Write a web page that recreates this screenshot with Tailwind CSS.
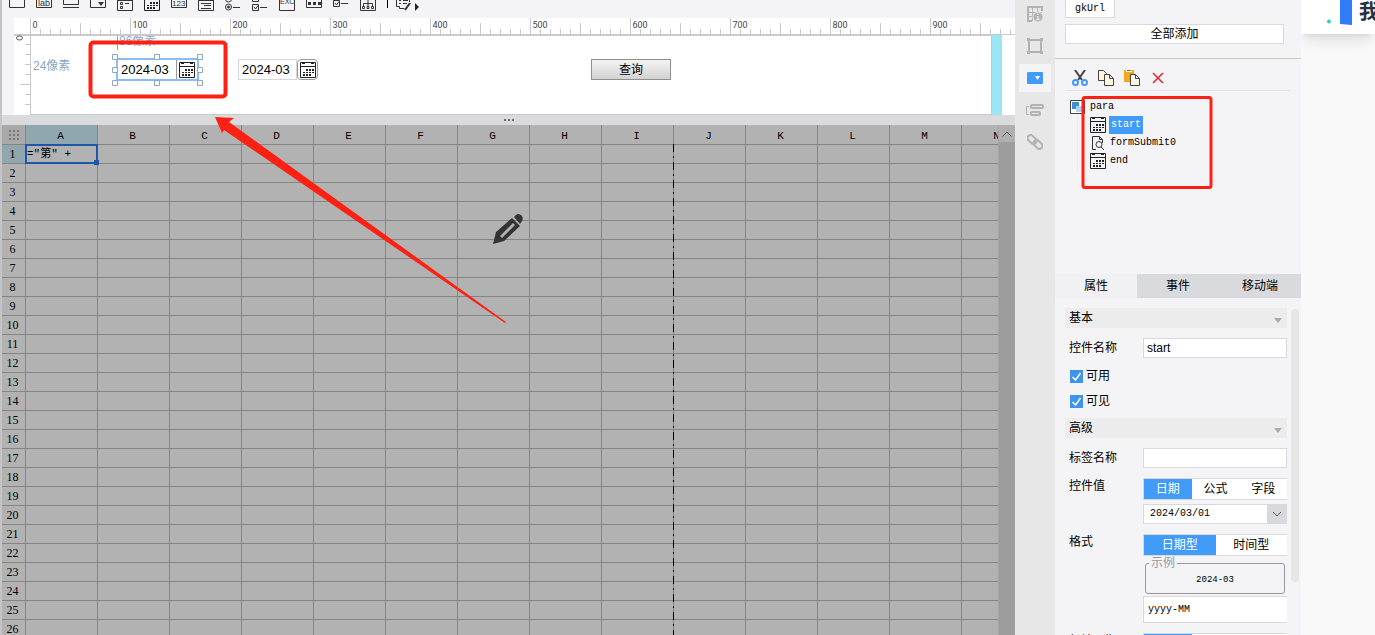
<!DOCTYPE html>
<html lang="zh-CN">
<head>
  <meta charset="UTF-8" />
  <meta name="viewport" content="width=device-width, initial-scale=1.0"/>
  <title>Report Designer</title>
  <script src="https://cdn.jsdelivr.net/npm/@tailwindcss/browser@4"></script>
</head>
<body class="relative flex h-screen overflow-hidden bg-[#f9f9f9] text-xs text-black font-['Liberation_Sans','Noto_Sans_CJK_SC',sans-serif]">
  <!-- Shared icons -->
  <svg class="hidden">
    <symbol id="calendar" viewBox="0 0 16 16">
      <path d="M.5.5h15v15H.5zM1 4.500h14M2 1.500h3M11 1.500h3" fill="none" stroke="#222"/>
      <path d="M6 7h2v2H6zM9 7h2v2H9zM12 7h2v2h-2zM3 10h2v1H3zM6 10h2v1H6zM9 10h2v1H9zM12 10h2v1h-2zM3 12h2v2H3zM6 12h2v2H6zM9 12h2v2H9z" fill="#222"/>
    </symbol>
  </svg>

  <!-- Designer -->
  <main class="flex min-w-0 flex-1 flex-col border-l-2 border-[#c4c4c6] bg-[#f4f4f7]">
    <!-- Widget toolbar -->
    <div class="flex h-[18px] shrink-0 items-end gap-[11px] pb-[6px] pl-[7px]" id="toolbar">
      <svg class="size-4 shrink-0" viewBox="0 0 16 16" fill="none" stroke="#333"><path d="M.5 0v11.500h15V0"/></svg>
      <svg class="size-4 shrink-0" viewBox="0 0 16 16" fill="none" stroke="#333"><path d="M.5 0v11.500h15V0"/><text x="2" y="10" font-size="9" fill="#333" stroke="none">lab</text></svg>
      <svg class="size-4 shrink-0" viewBox="0 0 16 16" fill="none" stroke="#333"><path d="M.5 0v8.500h15V0M0 11.500h16"/></svg>
      <svg class="size-4 shrink-0" viewBox="0 0 16 16" fill="none" stroke="#333"><path d="M.5 0v11.500h15V0"/><path d="M8 6h6l-3 4z" fill="#333" stroke="none"/></svg>
      <svg class="size-4 shrink-0" viewBox="0 0 16 16" fill="none" stroke="#333"><path d="M.5 0v14.500h15V0M0 4.500h16M3.500 6.500h2v2h-2zM3.500 10.500h2v2h-2zM8 7.500h4"/></svg>
      <svg class="size-4 shrink-0" viewBox="0 1 16 16"><use href="#calendar" width="16" height="16"/></svg>
      <svg class="size-4 shrink-0" viewBox="0 0 16 16" fill="none" stroke="#333"><path d="M.5 0v11.500h15V0"/><text x="1" y="10" font-size="8" fill="#333" stroke="none">123</text></svg>
      <svg class="size-4 shrink-0" viewBox="0 0 16 16" fill="none" stroke="#333"><path d="M.5 0v14.500h15V0M0 4.500h16M3 7.500h10M6 9.500h7M3 12.500h10"/></svg>
      <svg class="size-4 shrink-0" viewBox="0 0 16 16" fill="none" stroke="#333"><circle cx="3.500" cy="3" r="3"/><circle cx="3.500" cy="11" r="3"/><circle cx="3.500" cy="11" r="1" fill="#333"/><path d="M8 11.500h7M8 3.500h7"/></svg>
      <svg class="size-4 shrink-0" viewBox="0 0 16 16" fill="none" stroke="#333"><path d="M.5 0v5.500h6V0M.5 8.500h6v6h-6zM2 11l1.500 2L6 9.500M8 11.500h7M8 3.500h7"/></svg>
      <svg class="size-4 shrink-0" viewBox="0 0 16 16" fill="none" stroke="#333"><path d="M.5 0v14.500h15V0"/><text x="1" y="8" font-size="7" fill="#333" stroke="none">EXC</text></svg>
      <svg class="size-4 shrink-0" viewBox="0 0 16 16" fill="none" stroke="#333"><path d="M.5 0v11.500h15V0M0 3.500h16"/><path d="M2 6h3v3H2zM7 6h3v3H7zM12 6h3v3h-3z" fill="#333" stroke="none"/></svg>
      <svg class="size-4 shrink-0" viewBox="0 0 16 16" fill="none" stroke="#333"><path d="M.5 4.500h6v6h-6zM2 7l1.500 2L6 5.500M8 7.500h7"/></svg>
      <svg class="size-4 shrink-0" viewBox="0 0 16 16" fill="none" stroke="#333"><path d="M.5 0v14.500h15V0M8 3v7M3.500 10V7.500h9V10M2.500 10.500h2v2h-2zM7 10.500h2v2H7zM11.500 10.500h2v2h-2z"/></svg>
      <div class="mb-[4px] h-3 w-px shrink-0 bg-black"></div>
      <svg class="-ml-[3px] size-4 shrink-0" viewBox="0 0 16 16" fill="none" stroke="#333"><path d="M.5 0v10.500h3v2h5M13.500 0v6M3 4.500h2M7 4.500h5M3 7.500h2M7 7.500h4"/><path d="M9 14l5-7" stroke-width="2"/></svg>
      <svg class="-ml-[8px] mb-[1px] h-2 w-1 shrink-0" viewBox="0 0 4 8"><path d="M0 0l4 4-4 4z" fill="#222"/></svg>
    </div>

    <!-- Horizontal ruler -->
    <div class="ml-3 h-[17px] shrink-0 overflow-hidden border-b border-[#c9c9cc] bg-white pl-4">
      <svg id="ruler" class="h-full w-[1100px] font-[Roboto,sans-serif]"></svg>
    </div>

    <!-- Parameter pane -->
    <div class="ml-3 flex h-20 shrink-0 bg-white">
      <svg class="h-full w-4 shrink-0" viewBox="0 0 16 80">
        <path d="M0 .5h16M11 9.500h5M11 19.500h5M11 29.500h5M11 39.500h5M6 49.500h10M11 59.500h5M11 69.500h5" stroke="#c9c9cc"/>
        <ellipse cx="5.500" cy="3" rx="3" ry="2" fill="none" stroke="#555"/>
      </svg>
      <div class="relative flex-1 overflow-hidden border border-[#c9c9cc]">
        <span class="absolute left-[2px] top-[21px] leading-[18px] text-[#8ba9c5]">24像素</span>
        <span class="absolute left-[86px] -top-[4px] border-l border-[#8ba9c5] pl-px leading-[18px] text-[#8ba9c5]">86像素</span>

        <!-- Selected date widget -->
        <div class="absolute left-[85px] top-[22px] flex h-[23px] w-[83px] border-2 border-[#8bbcf7] bg-white">
          <input aria-label="start" value="2024-03" class="min-w-0 flex-1 pl-[3px] text-[13px]"/>
          <button aria-label="选择开始日期" class="w-[21px] border-l border-[#999] pl-[2px]"><svg class="size-4"><use href="#calendar"/></svg></button>
          <svg class="pointer-events-none absolute -left-[7px] -top-[7px] h-[33px] w-[93px]" fill="#fff" stroke="#8ba9c5">
            <path d="M1.500 1.500h5v5h-5zM43.500 1.500h5v5h-5zM86.500 1.500h5v5h-5zM1.500 14.500h5v5h-5zM86.500 14.500h5v5h-5zM1.500 27.500h5v5h-5zM43.500 27.500h5v5h-5zM86.500 27.500h5v5h-5z"/>
          </svg>
        </div>

        <!-- End date widget -->
        <div class="absolute left-[207px] top-[23px] flex h-[21px] w-20">
          <input aria-label="end" value="2024-03" class="min-w-0 flex-1 border border-[#d5d6d9] pl-[3px] text-[13px]"/>
          <button aria-label="选择结束日期" class="w-[21px] rounded-sm border border-[#999] pl-[2px]"><svg class="size-4"><use href="#calendar"/></svg></button>
        </div>

        <button class="absolute left-[560px] top-[23px] h-[21px] w-20 border border-[#8f8f92] bg-linear-to-b from-[#f4f4f4] to-[#d2d2d2] text-xs">查询</button>
      </div>
      <div class="w-[10px] bg-[#9be5f4]"></div>
      <div class="w-[13px]"></div>
    </div>

    <!-- Splitter -->
    <div class="flex h-[10px] shrink-0 items-center justify-center gap-[2px] bg-[#dadadc]">
      <i class="size-[2px] bg-[#666]"></i><i class="size-[2px] bg-[#666]"></i><i class="size-[2px] bg-[#666]"></i>
    </div>

    <!-- Sheet -->
    <div class="flex min-h-0 flex-1 bg-[#b2b2b2]">
      <div class="relative min-w-0 flex-1 overflow-hidden">
        <table class="w-[1032px] table-fixed border-separate border-spacing-0 font-['Liberation_Mono','Noto_Sans_CJK_SC',monospace]">
          <thead><tr id="sheetHead"></tr></thead>
          <tbody id="sheetBody"></tbody>
        </table>
        <!-- page break -->
        <svg class="pointer-events-none absolute left-[671px] top-[19px] h-full w-px"><path d="M.5 0v700" stroke="#000" stroke-dasharray="8 4 2 4"/></svg>
      </div>
      <div class="w-[17px] border-l border-[#a5a5a5] bg-[#9d9d9d]">
        <div class="flex h-[17px] items-center justify-center bg-[#b0b0b0]">
          <svg class="h-2 w-3" viewBox="0 0 12 8"><path d="M1.500 6.500L6 2l4.500 4.500" fill="none" stroke="#555"/></svg>
        </div>
      </div>
    </div>
  </main>

  <!-- Tool strip -->
  <nav class="flex w-10 shrink-0 flex-col items-center gap-1 bg-[#e7e7e7]">
    <button aria-label="单元格属性" class="flex h-7 w-8 items-center justify-center">
      <svg class="size-4" viewBox="0 0 16 16" fill="none" stroke="#b2b2b2"><path d="M15 5V1H1v14h4" stroke-width="2"/><path d="M1 6.500h14M1 10.500h5M5.500 1v14M10.500 1v6"/><circle cx="11" cy="11" r="5" fill="#b2b2b2" stroke="#e7e7e7"/><path d="M11 7.500v1.500M10 10.500h1v3M9.500 13.500h3" stroke="#fff"/></svg>
    </button>
    <button aria-label="悬浮元素" class="flex h-7 w-8 items-center justify-center">
      <svg class="size-4" viewBox="0 0 16 16" fill="none" stroke="#b2b2b2"><path d="M2 2h12v12H2z" stroke-width="2"/><path d="M0 0h3v3H0zM13 0h3v3h-3zM0 13h3v3H0zM13 13h3v3h-3z" fill="#b2b2b2" stroke="none"/></svg>
    </button>
    <button aria-label="控件设置" class="flex h-7 w-8 items-center justify-center bg-[#f4f4f7]">
      <svg class="size-4" viewBox="0 0 16 16"><rect y="2" width="16" height="12" rx="1" fill="#419bf9"/><path d="M8 6h5l-2.500 4z" fill="#fff"/></svg>
    </button>
    <button aria-label="条件属性" class="flex h-7 w-8 items-center justify-center">
      <svg class="h-4 w-[18px]" viewBox="0 0 18 16" fill="none" stroke="#b2b2b2"><path d="M3 4.500H.5v8H3"/><rect x="5" y="3" width="12" height="3" rx="1" stroke-width="2"/><rect x="5" y="10" width="9" height="3" rx="1" stroke-width="2"/></svg>
    </button>
    <button aria-label="超级链接" class="flex h-7 w-8 items-center justify-center">
      <svg class="size-4" viewBox="0 0 16 16" fill="none" stroke="#b2b2b2" stroke-width="2"><rect x="0" y="2.500" width="10" height="6" rx="3" transform="rotate(45 5 5.500)"/><rect x="6" y="7.500" width="10" height="6" rx="3" transform="rotate(45 11 10.500)"/></svg>
    </button>
  </nav>

  <!-- Widget panel -->
  <aside class="flex w-[246px] shrink-0 flex-col bg-[#f4f4f7]">
    <div class="h-[274px] shrink-0">
      <div class="flex h-[58px] flex-col items-start gap-[6px] px-[10px]">
        <button class="h-[18px] w-[50px] shrink-0 border border-t-0 border-[#d8d9dc] bg-white font-['Liberation_Mono',monospace] text-[10px]">gkUrl</button>
        <button class="h-5 w-[219px] shrink-0 border border-[#d8d9dc] bg-white">全部添加</button>
      </div>
      <div class="border-t border-[#c8c8b8]"></div>
      <div class="mx-[10px] flex h-8 items-center gap-[10px] border-b border-[#e4e4e6] pl-[7px] pt-[6px]">
        <button aria-label="剪切"><svg class="block size-4" viewBox="0 0 16 16" fill="none"><path d="M3 0l7 10M13 0L6 10" stroke="#444" stroke-width="2"/><circle cx="3.500" cy="12.500" r="2.500" stroke="#419bf9" stroke-width="2"/><circle cx="12.500" cy="12.500" r="2.500" stroke="#419bf9" stroke-width="2"/></svg></button>
        <button aria-label="复制"><svg class="block size-4" viewBox="0 0 16 16" fill="#fff6e0" stroke="#444"><path d="M.5.5h5l3 3v7h-8z"/><path d="M6.500 4.500h5l4 4v7h-9zM11.500 4.500v4h4"/></svg></button>
        <button aria-label="粘贴"><svg class="block size-4" viewBox="0 0 16 16"><path d="M0 0h10v12H0z" fill="#f2a81d"/><path d="M2 0h6v2H2z" fill="#fff"/><path d="M3 0h4v1H3z" fill="#c84a1c"/><path d="M6.500 4.500h5l4 4v7h-9zM11.500 4.500v4h4" fill="#fff6e0" stroke="#444"/></svg></button>
        <button aria-label="删除"><svg class="block size-4" viewBox="0 0 16 16"><path d="M3 3l10 10M13 3L3 13" stroke="#e8262b" stroke-width="1.500"/></svg></button>
      </div>

      <!-- Widget tree -->
      <ul class="px-[15px] pt-[7px] font-['Liberation_Mono',monospace] text-[10px] leading-[18px]">
        <li class="flex h-[18px] items-center gap-[5px]">
          <svg class="size-[15px]" viewBox="0 0 15 15"><path d="M.5.5h14v13H.5z" fill="#fff" stroke="#444"/><path d="M2 2h7v7H2z" fill="#3a8fcc"/><path d="M6 6h7v6H6z" fill="#b9d0f5"/></svg>para
        </li>
        <li>
          <ul class="ml-[7px] border-l border-[#ececee] pl-[12px]">
            <li class="flex h-[18px] items-center gap-[3px]"><svg class="size-4"><use href="#calendar"/></svg><span class="w-[34px] bg-[#419bf9] pl-[2px] text-white">start</span></li>
            <li class="flex h-[18px] items-center gap-[5px]">
              <svg class="size-4 -mr-[1px]" viewBox="0 0 16 16" fill="none" stroke="#333"><path d="M6 14.500H2.500V1.500h7l3 3V8M9.500 1.500v3h3"/><circle cx="9" cy="9.500" r="3"/><path d="M11 12l3 3"/></svg>formSubmit0
            </li>
            <li class="flex h-[18px] items-center gap-[5px]"><svg class="-mr-[1px] size-4"><use href="#calendar"/></svg>end</li>
          </ul>
        </li>
      </ul>
    </div>

    <!-- Property tabs -->
    <div class="grid h-6 shrink-0 grid-cols-3 bg-[#d9dadd]">
      <button class="bg-[#f1f1f3]">属性</button>
      <button>事件</button>
      <button>移动端</button>
    </div>

    <div class="flex min-h-0 flex-1 overflow-hidden">
      <form class="flex w-[232px] shrink-0 flex-col gap-[10px] pl-[10px] pt-[10px]">
        <div class="flex h-5 shrink-0 items-center justify-between bg-[#ececec] pl-[4px] pr-[5px]">基本<svg class="mt-1 h-[5px] w-2" viewBox="0 0 8 5"><path d="M0 0h8L4 5z" fill="#a9a9a9"/></svg></div>
        <div class="flex h-5 shrink-0 items-center pl-[4px]">
          <label for="name" class="w-[74px]">控件名称</label>
          <input id="name" value="start" class="h-5 min-w-0 flex-1 border border-[#d8d9dc] bg-white pl-[3px]"/>
        </div>
        <div class="-mt-[2px] flex shrink-0 flex-col gap-[5px] pl-[5px]">
          <label class="relative flex h-5 items-center gap-[3px]"><input type="checkbox" checked class="size-[13px] appearance-none bg-[#3c94ee]"/><svg class="absolute left-0 size-[13px]" viewBox="0 0 13 13"><path d="M2.500 7l3 3 5-7" fill="none" stroke="#fff" stroke-width="1.500"/></svg>可用</label>
          <label class="relative flex h-5 items-center gap-[3px]"><input type="checkbox" checked class="size-[13px] appearance-none bg-[#3c94ee]"/><svg class="absolute left-0 size-[13px]" viewBox="0 0 13 13"><path d="M2.500 7l3 3 5-7" fill="none" stroke="#fff" stroke-width="1.500"/></svg>可见</label>
        </div>
        <div class="-mt-[3px] flex h-5 shrink-0 items-center justify-between bg-[#ececec] pl-[4px] pr-[5px]">高级<svg class="mt-1 h-[5px] w-2" viewBox="0 0 8 5"><path d="M0 0h8L4 5z" fill="#a9a9a9"/></svg></div>
        <div class="flex h-5 shrink-0 items-center pl-[4px]">
          <label for="label" class="w-[74px]">标签名称</label>
          <input id="label" class="h-5 min-w-0 flex-1 border border-[#d8d9dc] bg-white pl-[3px]"/>
        </div>
        <div class="flex shrink-0 pl-[4px]">
          <label for="value" class="w-[74px]">控件值</label>
          <div class="flex min-w-0 flex-1 flex-col gap-1">
            <div class="grid h-[22px] grid-cols-3 border border-r-0 border-[#d8d9dc] bg-white">
              <button type="button" class="bg-[#419bf9] text-white">日期</button>
              <button type="button">公式</button>
              <button type="button">字段</button>
            </div>
            <div class="relative flex h-5">
              <select id="value" class="h-5 flex-1 appearance-none border border-[#d8d9dc] bg-white pl-[6px] font-['Liberation_Mono',monospace] text-[10px]"><option>2024/03/01</option></select>
              <span class="pointer-events-none absolute inset-y-0 right-0 flex w-5 items-center justify-center bg-[#d8d9dc]"><svg class="h-2 w-3" viewBox="0 0 12 8"><path d="M2 2l4 4 4-4" fill="none" stroke="#555"/></svg></span>
            </div>
          </div>
        </div>
        <div class="flex shrink-0 pl-[4px]">
          <label for="format" class="w-[74px]">格式</label>
          <div class="min-w-0 flex-1">
            <div class="grid h-[22px] grid-cols-2 border border-r-0 border-[#d8d9dc] bg-white">
              <button type="button" class="bg-[#419bf9] text-white">日期型</button>
              <button type="button">时间型</button>
            </div>
            <fieldset class="mx-[2px] h-[38px] rounded-[3px] border border-[#98989c]">
              <legend class="ml-[3px] h-[14px] px-[2px] leading-[14px] text-[#98989c]">示例</legend>
              <output class="block text-center font-['Liberation_Mono',monospace] text-[9px] leading-[20px]">2024-03</output>
            </fieldset>
            <input id="format" value="yyyy-MM" class="mt-[2px] h-[27px] w-full border border-r-0 border-[#d8d9dc] bg-white pl-[4px] font-['Liberation_Mono',monospace] text-[10px]"/>
          </div>
        </div>
        <div class="flex shrink-0 pl-[4px]">
          <span class="w-[74px]">起始日期</span>
          <div class="grid h-[22px] flex-1 grid-cols-3 border border-r-0 border-[#d8d9dc] bg-white">
            <button type="button" class="bg-[#419bf9] text-white">日期</button>
            <button type="button">公式</button>
            <button type="button">字段</button>
          </div>
        </div>
      </form>
      <div class="ml-1 mt-[11px] h-[273px] w-2 rounded-sm bg-[#e6e6e7]"></div>
    </div>
  </aside>

  <!-- Page behind the designer -->
  <div class="w-[74px] shrink-0 overflow-hidden">
    <header class="flex h-[34px] overflow-hidden bg-white pl-[26px] shadow-lg">
      <svg class="h-[26px] w-[26px] shrink-0" viewBox="0 0 26 26"><path d="M13 0h12v25l-12-1z" fill="#2f7cf6"/><circle cx="2" cy="21.500" r="2" fill="#2fcfc8"/></svg>
      <span class="ml-[6px] text-[20px] font-bold leading-6 text-[#2a3040]">我</span>
    </header>
  </div>

  <!-- Annotations -->
  <svg class="pointer-events-none absolute left-0 top-0 h-full w-full" fill="none" stroke="#fd2114">
    <rect x="90.500" width="135" y="42.500" height="54" rx="3" stroke-width="4"/>
    <rect x="1083" y="97.500" width="128" height="90" rx="2" stroke-width="3"/>
    <path d="M215 117L234 118L229 122L506 322L505 323L224 130L222 133z" fill="#fd2114" stroke="none"/>
    <g transform="translate(493 213)" fill="#333" stroke="none">
      <path fill-rule="evenodd" d="M0 31l3-12L19 5l8 8-16 15zM7 23L20 10l2 2L9 25z"/>
      <path d="M21 4l2-2c3-3 9 2 6 6l-2 3z"/>
    </g>
  </svg>

  <script>
    // Ruler: one unit is one pixel, a label every 100
    let ticks = '';
    for (let i = 0; i <= 100; i++) {
      const x = i * 10 + 0.5;
      const top = i % 10 === 0 ? 0 : i % 5 === 0 ? 5 : 11;
      ticks += `<path d="M${x} ${top}V17" stroke="#c9c9cc"/>`;
      if (i % 10 === 0) ticks += `<text x="${x + 2}" y="10" font-size="9" fill="#444">${i * 10}</text>`;
    }
    document.getElementById('ruler').innerHTML = ticks;

    const head = document.getElementById('sheetHead');
    head.innerHTML = '<th class="h-5 w-6 border-b border-r border-[#858585] bg-[#a9a9a9] p-0"><svg class="mx-auto size-[10px]" viewBox="0 0 10 10"><path d="M0 1h2M4 1h2M8 1h2M0 5h2M4 5h2M8 5h2M0 9h2M4 9h2M8 9h2" stroke="#777" stroke-width="2"/></svg></th>';
    'ABCDEFGHIJKLMN'.split('').forEach(letter => {
      const bg = letter === 'A' ? 'bg-[#91a7af]' : '';
      head.innerHTML += `<th class="h-5 w-[72px] border-b border-r border-[#858585] p-0 pr-[2px] pt-[2px] text-[11px] font-normal leading-4 ${bg}">${letter}</th>`;
    });

    const body = document.getElementById('sheetBody');
    let rows = '';
    for (let r = 1; r <= 26; r++) {
      const bg = r === 1 ? 'bg-[#91a7af]' : '';
      rows += `<tr><th class="h-[19px] border-b border-r border-[#858585] p-0 pr-[2px] text-center font-['Liberation_Serif',serif] text-xs font-normal leading-4 ${bg}">${r}</th>`;
      for (let c = 0; c < 14; c++) {
        if (r === 1 && c === 0) {
          rows += `<td class="relative h-[19px] border-b border-r border-[#858585] p-0 pl-px text-[11px] leading-4">="第" +
            <span class="absolute -inset-x-px -bottom-px -top-px border-2 border-[#1f57a8]"></span>
            <span class="absolute -bottom-[2px] -right-[2px] size-[5px] bg-[#1f57a8]"></span></td>`;
        } else {
          rows += '<td class="h-[19px] border-b border-r border-[#858585] p-0"></td>';
        }
      }
      rows += '</tr>';
    }
    body.innerHTML = rows;
  </script>
</body>
</html>
